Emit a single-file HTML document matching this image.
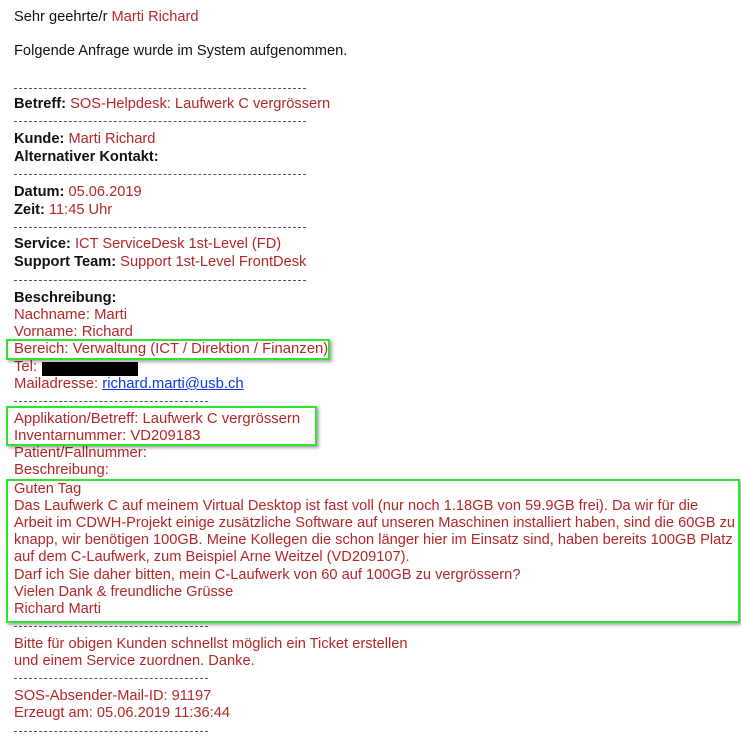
<!DOCTYPE html>
<html><head><meta charset="utf-8"><style>
html,body{margin:0;padding:0;background:#fff;width:741px;height:739px;overflow:hidden;}
body{position:relative;font-family:"Liberation Sans",Arial,sans-serif;font-size:15px;color:#111;}
.l{position:absolute;left:14px;height:18px;line-height:18px;white-space:nowrap;transform:scaleX(0.975);transform-origin:0 50%;}
.c{transform:scaleX(0.99);transform-origin:0 50%;}
.c2{transform:scaleX(0.975);transform-origin:0 50%;}
.r{color:#b5262b;}
b{font-weight:bold;color:#111;}
.d{position:absolute;left:14px;height:1px;border-top:1px dashed #555;}
.g{position:absolute;border:2px solid #2ee52e;box-shadow:2px 2px 3px rgba(0,0,0,0.35);}
a{color:#0a3bdc;text-decoration:underline;}
</style></head><body>
<div class="l" style="top:8px">Sehr geehrte/r <span class="r">Marti Richard</span></div>
<div class="l" style="top:42px">Folgende Anfrage wurde im System aufgenommen.</div>
<div class="d" style="top:88px;width:292px"></div>
<div class="l" style="top:95px"><b>Betreff:</b> <span class="r">SOS-Helpdesk: Laufwerk C vergrössern</span></div>
<div class="d" style="top:121px;width:292px"></div>
<div class="l" style="top:130px"><b>Kunde:</b> <span class="r">Marti Richard</span></div>
<div class="l" style="top:148px"><b>Alternativer Kontakt:</b></div>
<div class="d" style="top:174px;width:292px"></div>
<div class="l" style="top:183px"><b>Datum:</b> <span class="r">05.06.2019</span></div>
<div class="l" style="top:201px"><b>Zeit:</b> <span class="r">11:45 Uhr</span></div>
<div class="d" style="top:227px;width:292px"></div>
<div class="l" style="top:235px"><b>Service:</b> <span class="r">ICT ServiceDesk 1st-Level (FD)</span></div>
<div class="l" style="top:253px"><b>Support Team:</b> <span class="r">Support 1st-Level FrontDesk</span></div>
<div class="d" style="top:280px;width:292px"></div>
<div class="l" style="top:289px"><b>Beschreibung:</b></div>
<div class="l r c" style="top:306px">Nachname: Marti</div>
<div class="l r c" style="top:323px">Vorname: Richard</div>
<div class="l r c" style="top:340px">Bereich: Verwaltung (ICT / Direktion / Finanzen)</div>
<div class="l r c" style="top:358px">Tel:</div>
<div style="position:absolute;left:42px;top:362px;width:96px;height:14px;background:#000;"></div>
<div class="l r c" style="top:375px">Mailadresse: <a>richard.marti@usb.ch</a></div>
<div class="d" style="top:401px;width:194px"></div>
<div class="l r c" style="top:410px">Applikation/Betreff: Laufwerk C vergrössern</div>
<div class="l r c" style="top:427px">Inventarnummer: VD209183</div>
<div class="l r c" style="top:444px">Patient/Fallnummer:</div>
<div class="l r c" style="top:461px">Beschreibung:</div>
<div class="l r c2" style="top:480px">Guten Tag</div>
<div class="l r c2" style="top:497px">Das Laufwerk C auf meinem Virtual Desktop ist fast voll (nur noch 1.18GB von 59.9GB frei). Da wir für die</div>
<div class="l r c2" style="top:514px">Arbeit im CDWH-Projekt einige zusätzliche Software auf unseren Maschinen installiert haben, sind die 60GB zu</div>
<div class="l r c2" style="top:531px">knapp, wir benötigen 100GB. Meine Kollegen die schon länger hier im Einsatz sind, haben bereits 100GB Platz</div>
<div class="l r c2" style="top:548px">auf dem C-Laufwerk, zum Beispiel Arne Weitzel (VD209107).</div>
<div class="l r c2" style="top:566px">Darf ich Sie daher bitten, mein C-Laufwerk von 60 auf 100GB zu vergrössern?</div>
<div class="l r c2" style="top:583px">Vielen Dank &amp; freundliche Grüsse</div>
<div class="l r c2" style="top:600px">Richard Marti</div>
<div class="d" style="top:626px;width:194px"></div>
<div class="l r c2" style="top:635px">Bitte für obigen Kunden schnellst möglich ein Ticket erstellen</div>
<div class="l r c2" style="top:652px">und einem Service zuordnen. Danke.</div>
<div class="d" style="top:678px;width:194px"></div>
<div class="l r c2" style="top:687px">SOS-Absender-Mail-ID: 91197</div>
<div class="l r c2" style="top:704px">Erzeugt am: 05.06.2019 11:36:44</div>
<div class="d" style="top:731px;width:194px"></div>
<div class="g" style="left:6px;top:339px;width:320px;height:17px"></div>
<div class="g" style="left:6px;top:406px;width:307px;height:36px"></div>
<div class="g" style="left:6px;top:479px;width:730px;height:140px"></div>
</body></html>
